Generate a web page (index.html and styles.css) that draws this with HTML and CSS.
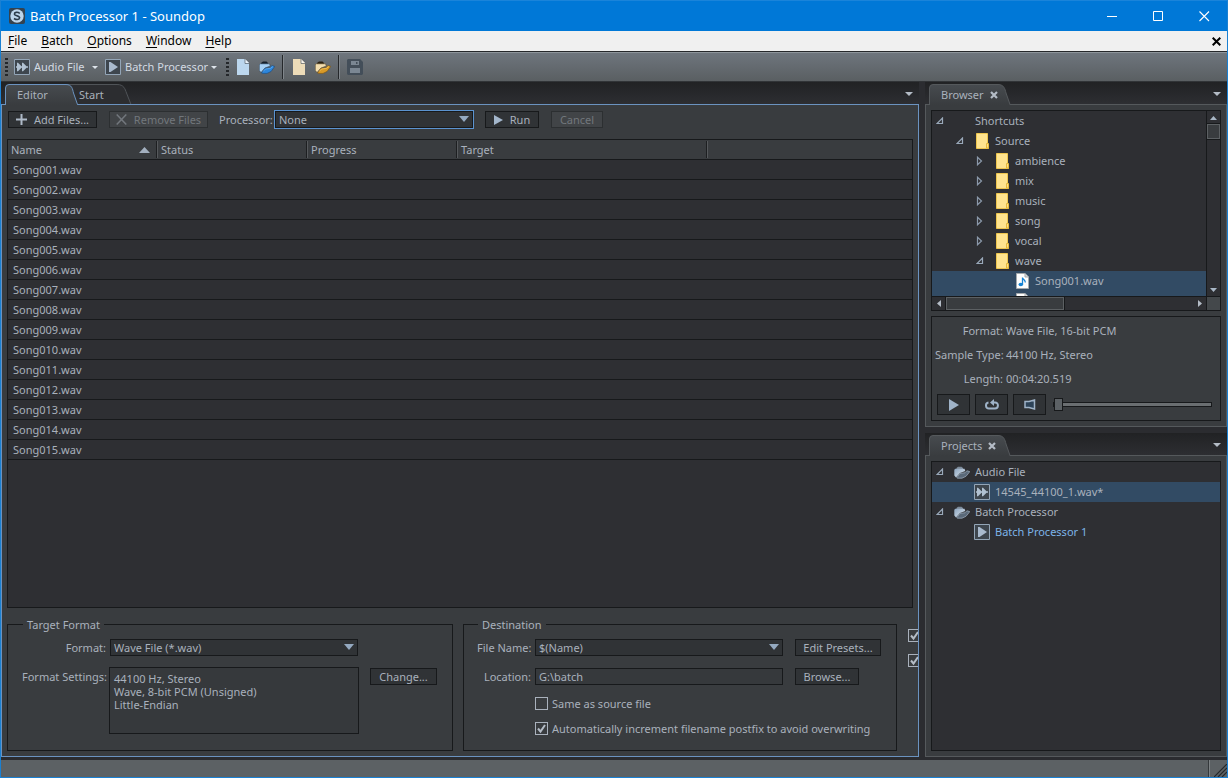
FILE: index.html
```html
<!DOCTYPE html>
<html lang="en">
<head>
<meta charset="utf-8">
<title>Batch Processor 1 - Soundop</title>
<link rel="stylesheet" href="styles.css">
</head>
<body>
<svg class="defs" aria-hidden="true">
  <defs>
    <linearGradient id="tabFill" x1="0" y1="0" x2="0" y2="1"><stop offset="0" stop-color="#474b4f"/><stop offset="1" stop-color="#393c3f"/></linearGradient>
    <linearGradient id="steel" x1="0" y1="0" x2="1" y2="1"><stop offset="0" stop-color="#8fa6bf"/><stop offset="1" stop-color="#dbe6f1"/></linearGradient>
    <symbol id="open" viewBox="0 0 8 8"><path d="M6.500 1V6.500H1Z" fill="none" stroke="#9aa9ba" stroke-width="1.200"/></symbol>
    <symbol id="closed" viewBox="0 0 8 10"><path d="M1.500 1.200V8.800L5.500 5Z" fill="none" stroke="#8b99aa" stroke-width="1.200"/></symbol>
    <symbol id="folder" viewBox="0 0 13 16"><path d="M.5.500h11v10l1 1v4H.5z" fill="#ffe48f" stroke="#efc64e"/><path d="M10.500 15v-4.500h2V15z" fill="#ffe08a" stroke="#e5b93a"/></symbol>
    <symbol id="song" viewBox="0 0 13 16"><path d="M.5.500h8.500l3.500 3.500v11.500H.5z" fill="#fdfdfd" stroke="#a5a9ac"/><path d="M9 .500V4h3.500" fill="#d8dadc" stroke="#a5a9ac"/><ellipse cx="4.800" cy="11.500" rx="2.300" ry="1.800" fill="#1783d3"/><path d="M6.500 11.500V4.500c.3 2 3 2.200 2.800 5" fill="none" stroke="#1783d3" stroke-width="1.300"/></symbol>
    <symbol id="dir" viewBox="0 0 16 13"><path d="M2.500 3.500V2L4 .800h3.500L9 2v1.500z" fill="#7d8b9a"/><path d="M.3 9.500V3.800L1.300 2.800H10.500L11.300 5 6 7 2 11.500z" fill="url(#steel)"/><path d="M2.800 11.800 6 7.300 11 6.800 12.800 4.800 15.800 5.600 12 10.300 8 12.200H3.500z" fill="#5a6979" stroke="#96a5b5" stroke-width=".8"/></symbol>
    <symbol id="dirBlue" viewBox="0 0 16 13"><path d="M2 3.500V2L4 .600h3.500L9 2v1.500z" fill="#16202b"/><path d="M.3 9.500V3.800L1.300 2.800H10.500L11.300 5 6 7 2 11.500z" fill="#a6d0f5" stroke="#24384c" stroke-width=".5"/><path d="M2.500 12 6 7.300 11 6.800 12.800 4.600 15.800 5.400 12 10.500 8 12.400H3.500z" fill="#2d86dc" stroke="#16406e" stroke-width=".5"/><path d="M4 10.500 6.500 8 11.500 7.300 14 5.500" fill="none" stroke="#62b0f4" stroke-width=".8"/></symbol>
    <symbol id="dirGold" viewBox="0 0 16 13"><path d="M2 3.500V2L4 .600h3.500L9 2v1.500z" fill="#2b2010"/><path d="M.3 9.500V3.800L1.300 2.800H10.500L11.300 5 6 7 2 11.500z" fill="#f3ddae" stroke="#4a3a1c" stroke-width=".5"/><path d="M2.500 12 6 7.300 11 6.800 12.800 4.600 15.800 5.400 12 10.500 8 12.400H3.500z" fill="#d99a28" stroke="#6b480e" stroke-width=".5"/><path d="M4 10.500 6.500 8 11.500 7.300 14 5.500" fill="none" stroke="#f5c860" stroke-width=".8"/></symbol>
    <symbol id="wave" viewBox="0 0 16 16"><path d="M.5.500h15v15H.5z" fill="#3e464e" stroke="#93a5b7"/><path d="M2 7.300h1V3.800h1L7.500 7.300h.5V3.800h1L12.500 7.300H14v1.400h-1.500L9 12.200H8V8.700h-.5L4 12.200H3V8.700H2z" fill="#b1c1d1"/></symbol>
    <symbol id="batch" viewBox="0 0 16 16"><path d="M.5.500h15v15H.5z" fill="#3e464e" stroke="#93a5b7"/><path d="M4 3v10h1.500L13 8 5.500 3z" fill="#a9bace"/></symbol>
    <symbol id="cross" viewBox="0 0 8 8"><path d="M1 1l6 6M7 1 1 7" fill="none" stroke="#b4bcc6" stroke-width="2.200"/></symbol>
    <symbol id="down" viewBox="0 0 8 4"><path d="M0 0h8L4 4z" fill="#b4bcc6"/></symbol>
    <symbol id="page" viewBox="0 0 12 16"><path d="M0 0h8l4 4v12H0z" fill="currentColor"/><path d="M8 0v4h4z" fill="#fff" opacity=".7"/><path d="M8 0v4.500h4" fill="none" stroke="#59616a" stroke-width=".7"/></symbol>
  </defs>
</svg>
<div class="window">
  <header class="titlebar">
    <svg class="logo" width="16" height="16" viewBox="0 0 16 16"><rect width="16" height="16" rx="2" fill="#34424f"/><circle cx="8" cy="8" r="6.700" fill="#bcd4ea"/><path d="M10.800 5.300C8.500 3.800 5.300 4 5.400 6.200 5.500 8 10.700 7.600 10.600 9.800 10.500 12 7.200 12 5 10.500" fill="none" stroke="#2b3b4a" stroke-width="1.600"/></svg>
    <h1>Batch Processor 1 - Soundop</h1>
    <div class="winbtns">
      <button aria-label="Minimize"><svg width="11" height="11"><path d="M0 5.500h10" stroke="#fff"/></svg></button>
      <button aria-label="Maximize"><svg width="11" height="11"><path d="M.5.500h9v9h-9z" fill="none" stroke="#fff"/></svg></button>
      <button aria-label="Close"><svg width="11" height="11"><path d="M.5.500l9.500 9.500M10 .5.500 10" stroke="#fff" stroke-width="1.100"/></svg></button>
    </div>
  </header>
  <nav class="menubar">
    <button><u>F</u>ile</button><button><u>B</u>atch</button><button><u>O</u>ptions</button><button><u>W</u>indow</button><button><u>H</u>elp</button>
    <button class="closedoc" aria-label="Close document"><svg width="9" height="9" viewBox="0 0 9 9"><path d="M.7.700l7.600 7.600M8.300.700.700 8.300" stroke="#000" stroke-width="2"/></svg></button>
  </nav>
  <div class="toolbar">
    <span class="grip"></span>
    <button class="tool audio"><svg width="16" height="16"><use href="#wave"/></svg><span>Audio File</span><svg class="caret" width="6" height="3" viewBox="0 0 8 4"><path d="M0 0h8L4 4z" fill="#dde3ea"/></svg></button>
    <button class="tool proc"><svg width="16" height="16"><use href="#batch"/></svg><span>Batch Processor</span><svg class="caret" width="6" height="3" viewBox="0 0 8 4"><path d="M0 0h8L4 4z" fill="#dde3ea"/></svg></button>
    <span class="grip"></span>
    <button class="iconbtn blue" aria-label="New audio file"><svg width="12" height="16"><use href="#page"/></svg></button>
    <button class="iconbtn" aria-label="Open audio file"><svg width="16" height="13"><use href="#dirBlue"/></svg></button>
    <span class="sep"></span>
    <button class="iconbtn cream" aria-label="New project"><svg width="12" height="16"><use href="#page"/></svg></button>
    <button class="iconbtn" aria-label="Open project"><svg width="16" height="13"><use href="#dirGold"/></svg></button>
    <span class="sep"></span>
    <button class="iconbtn" aria-label="Save" disabled><svg width="16" height="16" viewBox="0 0 16 16"><path d="M1 0h12l3 3v12l-1 1H1l-1-1V1z" fill="#434e59"/><path d="M4 2h8v4H4zM3 9h10v5H3z" fill="#7b8793"/><path d="M9 3h1.500v2H9z" fill="#434e59"/></svg></button>
  </div>

  <main class="workspace">
    <section class="dock editor">
      <div class="tabs">
        <button class="tab on"><svg width="74" height="21"><path d="M.5 21V4Q.5.500 4 .500H61C67 .500 67.500 5 68.500 9L72.500 20.500V21" fill="url(#tabFill)" stroke="#6b93c0"/></svg><span>Editor</span></button>
        <button class="tab start"><svg width="72" height="20"><path d="M.5 20.500V4Q.5.500 4 .500H57C64 .500 65 5 66.500 9L71 20.500" fill="#2c2d30" stroke="#505458"/></svg><span>Start</span></button>
        <button class="tabmenu" aria-label="Tab list"><svg width="8" height="4"><use href="#down"/></svg></button>
      </div>
      <div class="panel active">
        <div class="actions">
          <button class="btn add"><svg width="11" height="11"><path d="M5.500 0v11M0 5.500h11" stroke="#aebac8" stroke-width="2"/></svg>Add Files...</button>
          <button class="btn remove" disabled><svg width="11" height="11"><path d="M.7.500 10.300 10.500M10.300.500.700 10.500" stroke="#72777d" stroke-width="1.500"/></svg>Remove Files</button>
          <label for="processor">Processor:</label>
          <select id="processor" class="field focus"><option>None</option></select>
          <button class="btn run"><svg width="9" height="10"><path d="M0 0v10l9-5z" fill="#a3b6cb"/></svg>Run</button>
          <button class="btn cancel" disabled>Cancel</button>
        </div>
        <div class="list">
          <table>
            <thead><tr><th class="c1"><span class="sorted">Name<svg width="11" height="6"><path d="M0 6 5.500 0 11 6z" fill="#a3b0bf"/></svg></span></th><th class="c2">Status</th><th class="c2">Progress</th><th class="c3">Target</th><th class="rest"></th></tr></thead>
            <tbody>
              <tr><td colspan="5">Song001.wav</td></tr>
              <tr><td colspan="5">Song002.wav</td></tr>
              <tr><td colspan="5">Song003.wav</td></tr>
              <tr><td colspan="5">Song004.wav</td></tr>
              <tr><td colspan="5">Song005.wav</td></tr>
              <tr><td colspan="5">Song006.wav</td></tr>
              <tr><td colspan="5">Song007.wav</td></tr>
              <tr><td colspan="5">Song008.wav</td></tr>
              <tr><td colspan="5">Song009.wav</td></tr>
              <tr><td colspan="5">Song010.wav</td></tr>
              <tr><td colspan="5">Song011.wav</td></tr>
              <tr><td colspan="5">Song012.wav</td></tr>
              <tr><td colspan="5">Song013.wav</td></tr>
              <tr><td colspan="5">Song014.wav</td></tr>
              <tr><td colspan="5">Song015.wav</td></tr>
            </tbody>
          </table>
        </div>
        <div class="options">
          <fieldset class="target">
            <legend>Target Format</legend>
            <div class="form">
              <label for="format">Format:</label>
              <select id="format" class="field"><option>Wave File (*.wav)</option></select>
              <span></span>
              <label for="settings">Format Settings:</label>
              <textarea id="settings" readonly>44100 Hz, Stereo
Wave, 8-bit PCM (Unsigned)
Little-Endian</textarea>
              <button class="btn change">Change...</button>
            </div>
          </fieldset>
          <fieldset class="dest">
            <legend>Destination</legend>
            <div class="form">
              <label for="filename">File Name:</label>
              <select id="filename" class="field"><option>$(Name)</option></select>
              <button class="btn presets">Edit Presets...</button>
              <label for="location">Location:</label>
              <input id="location" class="field text" type="text" value="G:\batch">
              <button class="btn browse">Browse...</button>
              <label class="check"><input type="checkbox">Same as source file</label>
              <label class="check"><input type="checkbox" checked>Automatically increment filename postfix to avoid overwriting</label>
            </div>
          </fieldset>
          <div class="more">
            <input type="checkbox" checked aria-label="First option">
            <input type="checkbox" checked aria-label="Second option">
          </div>
        </div>
      </div>
    </section>

    <aside class="side">
      <section class="dock browser">
        <div class="tabs">
          <button class="tab on"><svg width="82" height="21"><path d="M.5 21V4Q.5.500 4 .500H69C75 .500 76 5 77 9L81 20.500V21" fill="url(#tabFill)" stroke="#55595c"/></svg><span>Browser</span><svg class="x" width="8" height="8"><use href="#cross"/></svg></button>
          <button class="tabmenu" aria-label="Tab list"><svg width="8" height="4"><use href="#down"/></svg></button>
        </div>
        <div class="panel">
          <div class="treebox">
            <ul class="tree">
              <li class="l0"><svg class="arrow" width="8" height="8"><use href="#open"/></svg><i></i>Shortcuts</li>
              <li class="l1"><svg class="arrow" width="8" height="8"><use href="#open"/></svg><i><svg width="13" height="16"><use href="#folder"/></svg></i>Source</li>
              <li class="l2"><svg class="arrow" width="8" height="10"><use href="#closed"/></svg><i><svg width="13" height="16"><use href="#folder"/></svg></i>ambience</li>
              <li class="l2"><svg class="arrow" width="8" height="10"><use href="#closed"/></svg><i><svg width="13" height="16"><use href="#folder"/></svg></i>mix</li>
              <li class="l2"><svg class="arrow" width="8" height="10"><use href="#closed"/></svg><i><svg width="13" height="16"><use href="#folder"/></svg></i>music</li>
              <li class="l2"><svg class="arrow" width="8" height="10"><use href="#closed"/></svg><i><svg width="13" height="16"><use href="#folder"/></svg></i>song</li>
              <li class="l2"><svg class="arrow" width="8" height="10"><use href="#closed"/></svg><i><svg width="13" height="16"><use href="#folder"/></svg></i>vocal</li>
              <li class="l2"><svg class="arrow" width="8" height="8"><use href="#open"/></svg><i><svg width="13" height="16"><use href="#folder"/></svg></i>wave</li>
              <li class="l3 sel"><b class="arrow"></b><i><svg width="13" height="16"><use href="#song"/></svg></i>Song001.wav</li>
              <li class="l3 sel"><b class="arrow"></b><i><svg width="13" height="16"><use href="#song"/></svg></i></li>
            </ul>
            <div class="vbar">
              <button aria-label="Scroll up"><svg width="7" height="4"><path d="M0 4 3.500 0 7 4z" fill="#a9b7c6"/></svg></button>
              <span class="thumb"></span>
              <button class="end" aria-label="Scroll down"><svg width="7" height="4"><path d="M0 0 3.500 4 7 0z" fill="#a9b7c6"/></svg></button>
            </div>
            <div class="hbar">
              <button aria-label="Scroll left"><svg width="4" height="7"><path d="M4 0 0 3.500 4 7z" fill="#b4bcc6"/></svg></button>
              <span class="thumb"></span>
              <button class="end" aria-label="Scroll right"><svg width="4" height="7"><path d="M0 0 4 3.500 0 7z" fill="#b4bcc6"/></svg></button>
            </div>
            <div class="corner"></div>
          </div>
          <div class="info">
            <dl>
              <dt>Format:</dt><dd>Wave File, 16-bit PCM</dd>
              <dt>Sample Type:</dt><dd>44100 Hz, Stereo</dd>
              <dt>Length:</dt><dd>00:04:20.519</dd>
            </dl>
            <div class="player">
              <button class="btn" aria-label="Play"><svg width="10" height="12"><path d="M0 0v12l10-6z" fill="#9fb3c8"/></svg></button>
              <button class="btn" aria-label="Loop"><svg width="14" height="11" viewBox="0 0 14 11"><path d="M3.500 3.500C0 4 .2 9.500 4 9.500h6c3.800 0 4-6 0-6H8" fill="none" stroke="#9fb3c8" stroke-width="2"/><path d="M9 0v7L5 3.500z" fill="#9fb3c8"/></svg></button>
              <button class="btn" aria-label="Speaker"><svg width="12" height="11" viewBox="0 0 12 11"><path d="M1 2.500h4l5.500-1.500v9L5 8.500H1z" fill="#2d4358" stroke="#9fb3c8" stroke-width="1.500"/></svg></button>
              <input type="range" min="0" max="100" value="0" aria-label="Position">
            </div>
          </div>
        </div>
      </section>
      <section class="dock projects">
        <div class="tabs">
          <button class="tab on"><svg width="82" height="21"><path d="M.5 21V4Q.5.500 4 .500H69C75 .500 76 5 77 9L81 20.500V21" fill="url(#tabFill)" stroke="#55595c"/></svg><span>Projects</span><svg class="x" width="8" height="8"><use href="#cross"/></svg></button>
          <button class="tabmenu" aria-label="Tab list"><svg width="8" height="4"><use href="#down"/></svg></button>
        </div>
        <div class="panel">
          <ul class="tree boxed">
            <li class="l0"><svg class="arrow" width="8" height="8"><use href="#open"/></svg><i class="wide"><svg width="16" height="13"><use href="#dir"/></svg></i>Audio File</li>
            <li class="l1 sel"><b class="arrow"></b><i class="wide"><svg width="16" height="16"><use href="#wave"/></svg></i>14545_44100_1.wav*</li>
            <li class="l0"><svg class="arrow" width="8" height="8"><use href="#open"/></svg><i class="wide"><svg width="16" height="13"><use href="#dir"/></svg></i>Batch Processor</li>
            <li class="l1 current"><b class="arrow"></b><i class="wide"><svg width="16" height="16"><use href="#batch"/></svg></i>Batch Processor 1</li>
          </ul>
        </div>
      </section>
    </aside>
  </main>
  <footer class="statusbar"><span class="cell"></span><svg width="13" height="13"><path d="M0 13 13 0M4 13l9-9M8 13l5-5" stroke="#24272a" stroke-width="1.200"/></svg></footer>
</div>
</body>
</html>
```

FILE: styles.css
```css
* { box-sizing: border-box; }
html, body { height: 100%; margin: 0; }
body { font: 11px/16px "Noto Sans", sans-serif; color: #a9b1bc; background: #2b2c30; }
button, select, input, textarea { font: inherit; color: inherit; margin: 0; padding: 0; border: 0; background: none; border-radius: 0; outline: 0; }
ul, dl, dd, h1 { margin: 0; padding: 0; list-style: none; }
svg { display: block; flex: none; }
.defs { position: absolute; width: 0; height: 0; }

.window { height: 100vh; display: flex; flex-direction: column; border: 1px solid #1a80d2; border-top: 0; }

.titlebar { height: 31px; display: flex; align-items: center; padding-left: 8px; background: #0078d7; border-top: 1px solid #1a84da; color: #fff; }
.titlebar h1 { flex: 1; margin-left: 5px; font-size: 13px; font-weight: 400; }
.winbtns { display: flex; }
.winbtns button { width: 46px; height: 30px; display: grid; place-items: center; }

.menubar { height: 21px; display: flex; align-items: center; gap: 14px; padding: 0 6px 0 7px; background: #f0f0f0; color: #000; font-size: 12px; border-bottom: 1px solid #26282b; }
.menubar u { text-underline-offset: 2px; }
.closedoc { margin-left: auto; }

.toolbar { height: 30px; display: flex; align-items: center; padding-left: 4px; color: #d3dae2; background: linear-gradient(#6e757d, #5a5f62); border-top: 1px solid #8e959b; border-bottom: 1px solid #313437; }
.grip { width: 3px; height: 19px; background: repeating-linear-gradient(#24272a 0 2px, transparent 2px 4px); }
.tool { display: flex; align-items: center; }
.tool span { margin-left: 4px; text-align: left; white-space: nowrap; }
.audio { margin-left: 6px; }
.audio span { width: 58px; }
.proc { margin: 0 9px 0 7px; }
.proc span { width: 86px; }
.iconbtn { width: 24px; display: grid; place-items: center; }
.grip + .iconbtn { margin-left: 2px; }
.blue { color: #bcd7ee; }
.cream { color: #eddcb8; }
.sep { width: 2px; height: 24px; margin: 0 3px; border-left: 1px solid #25282b; border-right: 1px solid #80868b; }

.workspace { flex: 1; min-height: 0; display: flex; gap: 6px; padding-bottom: 3px; }
.dock { display: flex; flex-direction: column; min-width: 0; }
.editor { flex: 1; }
.side { flex: 0 0 302px; display: flex; flex-direction: column; gap: 6px; }
.projects { flex: 1; }

.tabs { height: 22px; display: flex; padding: 2px 6px 0 4px; background: linear-gradient(#212224, #2d2e32); }
.tab { position: relative; z-index: 2; height: 21px; display: flex; align-items: center; padding: 0 12px; }
.tab > svg:first-child { position: absolute; inset: 0 auto auto 0; }
.tab span, .x { position: relative; }
.tab .x { margin-left: 6px; }
.editor .on { width: 62px; }
.start { z-index: 1; margin-left: -7px; padding-left: 19px; overflow: visible; }
.tabmenu { margin-left: auto; }
.panel { flex: 1; min-height: 0; display: flex; flex-direction: column; padding: 5px; background: #393c3f; border: 1px solid #55595c; }
.panel.active { border-color: #6b93c0; }

.actions { display: flex; align-items: center; height: 19px; margin: 0 0 10px 1px; }
.btn { height: 17px; display: inline-flex; align-items: center; justify-content: center; background: #303336; border: 1px solid #17191b; white-space: nowrap; line-height: 15px; }
.btn:disabled { color: #72777c; background: #414447; border-color: #2c2f31; }
.actions .btn svg { margin-right: 7px; }
.add { width: 89px; }
.remove { width: 99px; margin: 0 11px 0 12px; }
.run { width: 54px; margin: 0 12px; }
.cancel { width: 52px; }
.field { height: 17px; padding-left: 3px; border: 1px solid #17191b; line-height: 15px; background: #303336; }
select.field { appearance: none; background: #303336 url("data:image/svg+xml,%3Csvg xmlns='http://www.w3.org/2000/svg' width='10' height='6'%3E%3Cpath d='M0 0h10L5 6z' fill='%2394a9c0'/%3E%3C/svg%3E") no-repeat right 3px top 4px; }
.text { background: #36393c; }
.focus { width: 198px; margin-left: 4px; outline: 1px solid #5b93d0; }
.actions label { width: 52px; }

.list { flex: 1; min-height: 0; overflow: hidden; background: #2e2f33; border: 1px solid #17191b; }
table { width: 100%; table-layout: fixed; border-collapse: separate; border-spacing: 0; }
th, td { height: 20px; padding: 0; border-bottom: 1px solid #17191b; font-weight: 400; text-align: left; line-height: 16px; }
td { padding-left: 5px; }
th { padding-left: 3px; background: linear-gradient(90deg, #1d1f21 1px, #56595c 1px) right center / 2px 17px no-repeat #393c3f; }
.c1, .c2 { width: 150px; }
.c3 { width: 250px; }
th.rest { background: #393c3f; }
.sorted { display: flex; align-items: center; justify-content: space-between; padding-right: 8px; }

.options { display: flex; margin: 8px -5px 0 0; overflow: hidden; }
fieldset { flex: none; min-width: 0; height: 135px; margin: 0; padding: 6px 15px 0 14px; border: 1px solid #17191b; }
legend { height: 17px; margin-left: 1px; padding: 0 4px; line-height: 17px; }
.form { display: grid; column-gap: 4px; row-gap: 12px; align-items: start; }
.form > label:not(.check) { text-align: right; line-height: 17px; white-space: nowrap; }
.form .btn { margin-left: 8px; justify-self: start; }
.target { margin-right: 10px; }
.target .form { grid-template-columns: 84px 248px 75px; }
.dest .form { grid-template-columns: 54px 248px 98px; }
.dest { padding-right: 11px; padding-left: 13px; }
textarea { width: 250px; height: 67px; margin: -1px; padding: 4px; line-height: 13px; resize: none; border: 1px solid #17191b; background: #36393c; overflow: hidden; }
.change { width: 67px; }
.presets { width: 86px; }
.browse { width: 64px; }
.check { grid-column: 2 / -1; display: flex; align-items: center; gap: 4px; height: 13px; white-space: nowrap; }
input[type="checkbox"] { appearance: none; flex: none; width: 13px; height: 13px; border: 1px solid #a9b1bc; }
input[type="checkbox"]:checked { background: url("data:image/svg+xml,%3Csvg xmlns='http://www.w3.org/2000/svg' width='11' height='11'%3E%3Cpath d='M2 5.500 4.500 8.500 9 2' fill='none' stroke='%23b4bcc6' stroke-width='2'/%3E%3C/svg%3E"); }
.more { display: flex; flex-direction: column; gap: 12px; margin: 13px -10px 0 11px; }

.treebox { height: 201px; display: grid; grid-template: 1fr 14px / 1fr 14px; border: 1px solid #17191b; background: #2e2f33; }
.tree { min-height: 0; overflow: hidden; background: #2e2f33; }
.tree li { display: flex; align-items: center; height: 20px; white-space: nowrap; }
.tree .l0 { padding-left: 4px; }
.tree .l1 { padding-left: 24px; }
.tree .l2 { padding-left: 44px; }
.tree .l3 { padding-left: 64px; }
.tree .arrow { margin-right: 12px; width: 8px; }
.tree i { width: 19px; }
.tree .wide { width: 21px; margin-left: -2px; }
.sel { background: #324b64; }
.current { color: #7db4e8; }
.boxed { flex: 1; border: 1px solid #17191b; }
.vbar { display: flex; flex-direction: column; border-left: 1px solid #17191b; }
.hbar { display: flex; border-top: 1px solid #17191b; }
.vbar button, .hbar button { width: 13px; height: 13px; display: grid; place-items: center; }
.vbar .thumb { height: 15px; background: #393c3f; border: 1px solid #5c6063; box-shadow: 0 -1px #17191b, 0 1px #17191b; }
.hbar .thumb { width: 118px; margin-left: 1px; background: #393c3f; border: 1px solid #5c6063; box-shadow: -1px 0 #17191b, 1px 0 #17191b; }
.vbar .end { margin-top: auto; }
.hbar .end { margin-left: auto; }
.corner { border: 1px solid #17191b; border-width: 1px 0 0 1px; background: #44484b; }

.info { margin-top: 5px; padding: 2px 8px 5px 3px; border: 1px solid #17191b; }
dl { display: grid; grid-template-columns: 68px 1fr; column-gap: 3px; line-height: 24px; }
dt { text-align: right; white-space: nowrap; }
.player { display: flex; align-items: center; gap: 5px; margin: 3px 0 0 2px; }
.player .btn { width: 33px; height: 21px; }
input[type="range"] { appearance: none; flex: 1; min-width: 0; height: 13px; margin-left: 2px; }
input[type="range"]::-webkit-slider-runnable-track { height: 5px; border: 1px solid #17191b; background: #6a6e71; }
input[type="range"]::-webkit-slider-thumb { appearance: none; width: 9px; height: 13px; margin-top: -5px; background: #5c6165; border: 1px solid #17191b; }

.statusbar { height: 17px; display: flex; justify-content: flex-end; align-items: flex-end; background: #5c6164; }
.cell { align-self: stretch; width: 2px; margin-right: 4px; border-left: 1px solid #34383b; border-right: 1px solid #7d8285; }
```
